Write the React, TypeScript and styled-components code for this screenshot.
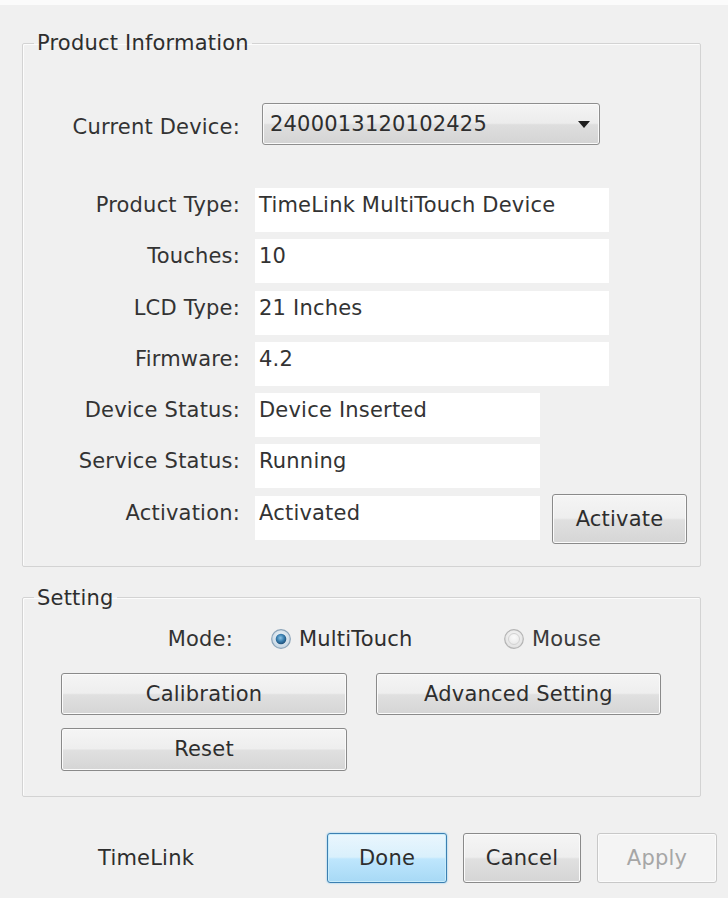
import styled, { createGlobalStyle } from 'styled-components';

const GlobalStyle = createGlobalStyle`
    html, body {
        margin: 0;
        padding: 0;
        background: #f0f0f0;
    }
    * {
        box-sizing: border-box;
    }
`;

const Dialog = styled.div`
    width: 728px;
    height: 898px;
    padding-top: 26px;
    border-top: 5px solid #fbfbfb;
    background: #f0f0f0;
    font-family: "DejaVu Sans", Verdana, sans-serif;
    font-size: 21px;
    letter-spacing: 0.2px;
    color: #333;
    overflow: hidden;
`;

const Group = styled.fieldset<{ $gap?: number }>`
    margin: ${({ $gap }) => $gap ?? 0}px 27px 0 22px;
    padding: 0;
    min-width: 0;
    border: 1px solid #d3d3d3;
    border-radius: 2px;
    box-shadow: inset 1px 1px 0 #fcfcfc;
`;

const Legend = styled.legend`
    margin-left: 11px;
    padding: 0 3px;
    line-height: 24px;
    color: #2e2e2e;
`;

const GroupBody = styled.div<{ $top: number; $bottom: number }>`
    padding: ${({ $top }) => $top}px 0 ${({ $bottom }) => $bottom}px;
    display: flex;
    flex-direction: column;
`;

const Row = styled.div`
    display: flex;
    align-items: flex-start;
    height: 44px;
`;

const Label = styled.span<{ $width?: number }>`
    width: ${({ $width }) => $width ?? 217}px;
    flex-shrink: 0;
    padding-top: 5px;
    line-height: 24px;
    text-align: right;
    white-space: nowrap;
`;

const Value = styled.div<{ $width: number }>`
    width: ${({ $width }) => $width}px;
    height: 44px;
    margin-left: 15px;
    padding: 5px 0 0 4px;
    line-height: 24px;
    background: #fff;
    white-space: nowrap;
`;

const InfoList = styled.div`
    display: flex;
    flex-direction: column;
    gap: 7.3px;
`;

const ComboRow = styled.div`
    display: flex;
    align-items: center;
    height: 42px;
    margin-bottom: 43px;
`;

const Combo = styled.div`
    width: 338px;
    height: 42px;
    margin-left: 22px;
    padding: 0 9px 0 7px;
    display: flex;
    align-items: center;
    justify-content: space-between;
    border: 1px solid #8e8e8e;
    border-radius: 3px;
    background: linear-gradient(#f4f4f4 0%, #ececec 48%, #dedede 52%, #d4d4d4 100%);
    box-shadow: inset 0 0 0 1px #fafafa;
    color: #2e2e2e;
`;

const Arrow = styled.span`
    width: 0;
    height: 0;
    border-left: 6.5px solid transparent;
    border-right: 6.5px solid transparent;
    border-top: 7px solid #1e1e1e;
`;

const Button = styled.button<{ $width: number; $height?: number; $variant?: 'default' | 'focus' | 'disabled' }>`
    width: ${({ $width }) => $width}px;
    height: ${({ $height }) => $height ?? 42}px;
    padding: 0;
    font-family: inherit;
    font-size: 21px;
    letter-spacing: inherit;
    border-radius: 3px;
    border: 1px solid ${({ $variant }) =>
        $variant === 'focus' ? '#3c7fb1' : $variant === 'disabled' ? '#c8c8c8' : '#8a8a8a'};
    color: ${({ $variant }) => ($variant === 'disabled' ? '#a6a6a6' : '#2e2e2e')};
    background: ${({ $variant }) =>
        $variant === 'focus'
            ? 'linear-gradient(#eaf6fd 0%, #d9f0fc 48%, #bee6fd 52%, #a7d9f5 100%)'
            : $variant === 'disabled'
            ? '#f4f4f4'
            : 'linear-gradient(#f5f5f5 0%, #eeeeee 48%, #e0e0e0 52%, #d5d5d5 100%)'};
    box-shadow: ${({ $variant }) =>
        $variant === 'focus'
            ? 'inset 0 0 0 1px #c8ecfb, 0 0 2px #6fc3ef'
            : 'inset 0 0 0 1px #fbfbfb'};
`;

const ActivateButton = styled(Button)`
    margin: -2px 0 -4px 12px;
`;

const ModeRow = styled.div`
    display: grid;
    grid-template-columns: 210px 196px auto;
    column-gap: 37px;
    align-items: center;
    height: 30px;
    margin-top: 2px;
`;

const ModeLabel = styled.span`
    text-align: right;
`;

const RadioOption = styled.label<{ $muted?: boolean }>`
    display: flex;
    align-items: center;
    gap: 7px;
    color: ${({ $muted }) => ($muted ? '#3a3a3a' : '#2e2e2e')};
`;

const ButtonGrid = styled.div`
    display: grid;
    grid-template-columns: 286px 285px;
    column-gap: 29px;
    row-gap: 13px;
    margin: 19px 0 0 38px;
`;

const Footer = styled.div`
    display: flex;
    align-items: center;
    justify-content: space-between;
    height: 50px;
    margin-top: 36px;
    padding: 0 11px 0 98px;
`;

const Brand = styled.span`
    color: #2e2e2e;
`;

const FooterButtons = styled.div`
    display: flex;
    gap: 16px;
`;

const Radio = ({ checked }: { checked: boolean }) => (
    <svg width="22" height="22" viewBox="0 0 22 22">
        <defs>
            <radialGradient id={checked ? 'rOn' : 'rOff'} cx="50%" cy="40%" r="60%">
                <stop offset="0%" stopColor={checked ? '#f4f8fb' : '#fafafa'} />
                <stop offset="100%" stopColor={checked ? '#c3d4e2' : '#e0e0e0'} />
            </radialGradient>
            <radialGradient id="dot" cx="45%" cy="40%" r="60%">
                <stop offset="0%" stopColor="#8cc4e6" />
                <stop offset="55%" stopColor="#3a7fb0" />
                <stop offset="100%" stopColor="#1c4e78" />
            </radialGradient>
        </defs>
        <circle cx="11" cy="11" r="9.3" fill={`url(#${checked ? 'rOn' : 'rOff'})`} stroke={checked ? '#8aa3b8' : '#b4b4b4'} strokeWidth="1.2" />
        {checked
            ? <circle cx="11" cy="11" r="5.3" fill="url(#dot)" />
            : <circle cx="11" cy="11" r="5.5" fill="none" stroke="#d2d2d2" strokeWidth="1" />}
    </svg>
);

const info = [
    { label: 'Product Type:', value: 'TimeLink MultiTouch Device', width: 354 },
    { label: 'Touches:', value: '10', width: 354 },
    { label: 'LCD Type:', value: '21 Inches', width: 354 },
    { label: 'Firmware:', value: '4.2', width: 354 },
    { label: 'Device Status:', value: 'Device Inserted', width: 285 },
    { label: 'Service Status:', value: 'Running', width: 285 },
    { label: 'Activation:', value: 'Activated', width: 285 },
];

const App = () => {
    return (
        <Dialog>
            <GlobalStyle />
            <Group>
                <Legend>Product Information</Legend>
                <GroupBody $top={48} $bottom={26}>
                    <ComboRow>
                        <Label>Current Device:</Label>
                        <Combo>
                            <span>2400013120102425</span>
                            <Arrow />
                        </Combo>
                    </ComboRow>
                    <InfoList>
                        {
                            info.map((item) => {
                                return (
                                    <Row key={item.label}>
                                        <Label>{item.label}</Label>
                                        <Value $width={item.width}>{item.value}</Value>
                                        {item.label === 'Activation:' && (
                                            <ActivateButton $width={135} $height={50}>Activate</ActivateButton>
                                        )}
                                    </Row>
                                );
                            })
                        }
                    </InfoList>
                </GroupBody>
            </Group>
            <Group $gap={19}>
                <Legend>Setting</Legend>
                <GroupBody $top={12} $bottom={25}>
                    <ModeRow>
                        <ModeLabel>Mode:</ModeLabel>
                        <RadioOption><Radio checked />MultiTouch</RadioOption>
                        <RadioOption $muted><Radio checked={false} />Mouse</RadioOption>
                    </ModeRow>
                    <ButtonGrid>
                        <Button $width={286}>Calibration</Button>
                        <Button $width={285}>Advanced Setting</Button>
                        <Button $width={286} $height={43}>Reset</Button>
                    </ButtonGrid>
                </GroupBody>
            </Group>
            <Footer>
                <Brand>TimeLink</Brand>
                <FooterButtons>
                    <Button $width={120} $height={50} $variant='focus'>Done</Button>
                    <Button $width={118} $height={50}>Cancel</Button>
                    <Button $width={120} $height={50} $variant='disabled'>Apply</Button>
                </FooterButtons>
            </Footer>
        </Dialog>
    );
};

export default App;
